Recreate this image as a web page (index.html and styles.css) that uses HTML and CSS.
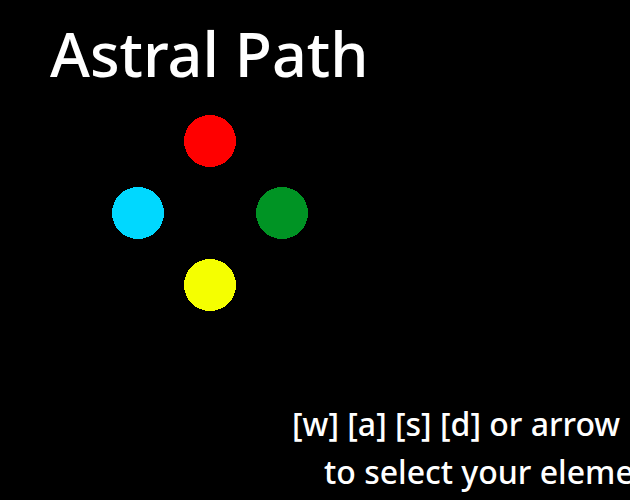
FILE: index.html
```html
<!DOCTYPE html>
<html>
<head>
<meta charset="utf-8">
<link rel="stylesheet" href="styles.css">
</head>
<body>
<div class="screen">
  <h1 class="title">Astral Path</h1>
  <div class="elements">
    <span class="cell"></span>
    <svg class="orb" width="52" height="52" viewBox="0 0 52 52" shape-rendering="crispEdges"><circle cx="26" cy="26" r="26" fill="#ff0000"/></svg>
    <span class="cell"></span>
    <svg class="orb" width="52" height="52" viewBox="0 0 52 52" shape-rendering="crispEdges"><circle cx="26" cy="26" r="26" fill="#00d8ff"/></svg>
    <span class="cell"></span>
    <svg class="orb" width="52" height="52" viewBox="0 0 52 52" shape-rendering="crispEdges"><circle cx="26" cy="26" r="26" fill="#009424"/></svg>
    <span class="cell"></span>
    <svg class="orb" width="52" height="52" viewBox="0 0 52 52" shape-rendering="crispEdges"><circle cx="26" cy="26" r="26" fill="#f5ff00"/></svg>
    <span class="cell"></span>
  </div>
  <div class="hint">
    <div class="line line1">[w] [a] [s] [d] or arrow keys</div>
    <div class="line line2">to select your element</div>
  </div>
</div>
</body>
</html>
```
FILE: styles.css
```css
html, body {
  margin: 0;
  padding: 0;
  background: #000;
}
.screen {
  width: 630px;
  height: 500px;
  overflow: hidden;
  background: #000;
  color: #fff;
  font-family: "Noto Sans", "Open Sans", sans-serif;
}
.title {
  margin: 0;
  padding: 14px 0 0 50px;
  font-size: 61px;
  font-weight: 500;
  line-height: 80px;
  white-space: nowrap;
}
.elements {
  display: grid;
  grid-template-columns: repeat(3, 52px);
  grid-template-rows: repeat(3, 52px);
  gap: 20px;
  margin: 21px 0 0 112px;
}
.orb {
  display: block;
}
.hint {
  margin-top: 89px;
  font-size: 32px;
  font-weight: 500;
  line-height: 48px;
  white-space: nowrap;
  overflow: hidden;
}
.line1 {
  padding-left: 292px;
}
.line2 {
  padding-left: 324px;
}
```
